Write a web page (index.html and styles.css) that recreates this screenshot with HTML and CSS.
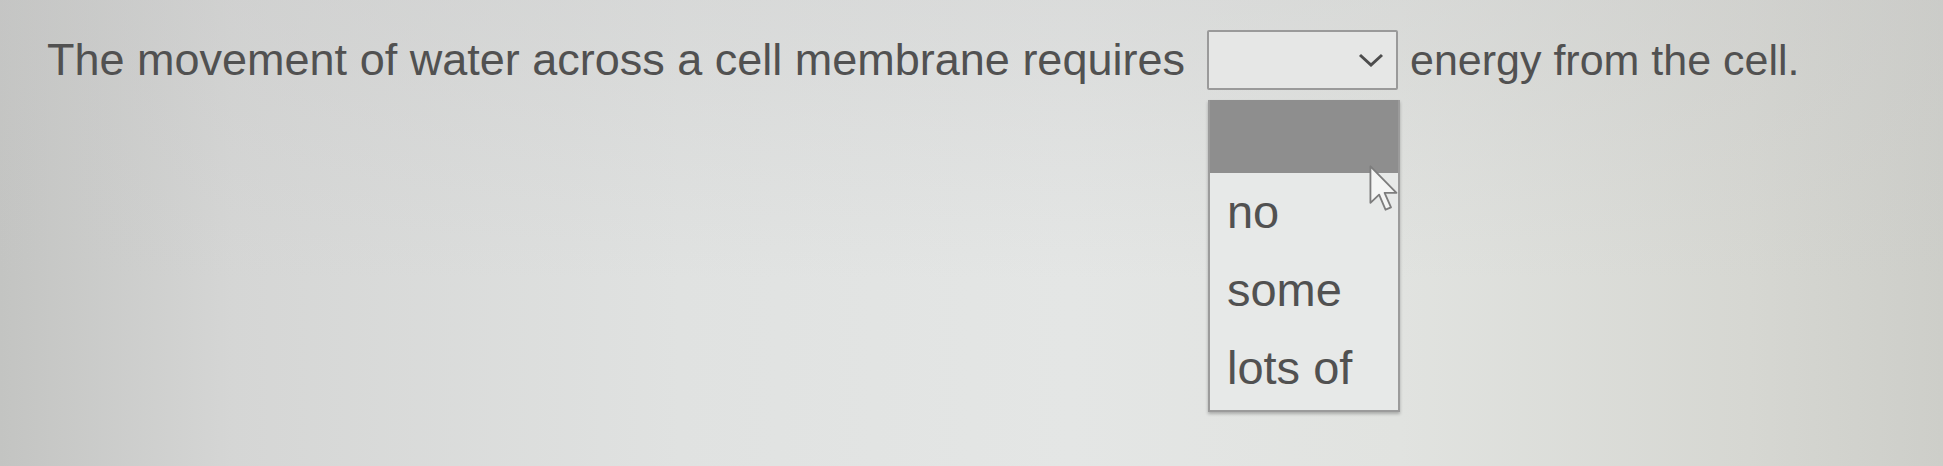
FILE: index.html
```html
<!DOCTYPE html>
<html>
<head>
  <title>Cell Transport Quiz</title>
  <link rel="stylesheet" href="styles.css">
</head>
<body>
  <div class="question">
    <span class="stem">The movement of water across a cell membrane requires</span>
    <div class="choice">
      <div class="select-box">
        <svg class="chevron" width="26" height="14" viewBox="0 0 26 14">
          <polyline points="2,2 13,12 24,2" fill="none" stroke="#4d4d4d" stroke-width="3"/>
        </svg>
      </div>
      <ul class="options">
        <li class="option blank"></li>
        <li class="option">no</li>
        <li class="option">some</li>
        <li class="option">lots of</li>
        <svg class="pointer" width="30" height="48" viewBox="0 0 13 21">
          <path d="M1 1 L1 17 L4.8 13.4 L7.6 20 L10 19 L7.2 12.6 L12.4 12.6 Z" fill="#f4f5f4" stroke="#7d7d7d" stroke-width="0.8" stroke-linejoin="round"/>
        </svg>
      </ul>
    </div>
    <span class="tail">energy from the cell.</span>
  </div>
</body>
</html>
```

FILE: styles.css
```css
/* quiz page */
body {
  margin: 0;
  height: 466px;
  font-family: "Liberation Sans", Arial, sans-serif;
  color: #515151;
  background:
    linear-gradient(to bottom, rgba(200, 200, 200, 0.35), rgba(255, 255, 255, 0) 60%),
    linear-gradient(to right, #c3c4c2 0%, #d5d6d5 12%, #e0e2e1 35%, #e4e6e5 55%, #e1e3e0 72%, #d6d7d2 90%, #cdcec9 100%);
  overflow: hidden;
}

.question {
  display: flex;
  align-items: center;
  padding: 30px 0 0 47px;
  font-size: 45px;
  white-space: nowrap;
}

.tail {
  font-size: 43px;
}

.choice {
  position: relative;
  margin: 0 12px 0 22px;
}

.select-box {
  box-sizing: border-box;
  width: 191px;
  height: 60px;
  border: 2px solid #9a9a9a;
  border-radius: 2px;
  background-color: #e6e7e6;
  display: flex;
  align-items: center;
  justify-content: flex-end;
  padding-right: 12px;
}

.options {
  position: absolute;
  top: 70px;
  left: 1px;
  box-sizing: border-box;
  width: 192px;
  margin: 0;
  padding: 0 0 3px;
  list-style: none;
  background-color: #e7e9e8;
  border: 2px solid #9b9b9b;
  border-top: none;
  box-shadow: 0 2px 3px rgba(0, 0, 0, 0.25);
  font-size: 47px;
}

.option {
  height: 78px;
  line-height: 78px;
  padding-left: 17px;
}

.option.blank {
  height: 73px;
  background-color: #8e8e8e;
}

.pointer {
  position: absolute;
  left: 158px;
  top: 64px;
}
```
